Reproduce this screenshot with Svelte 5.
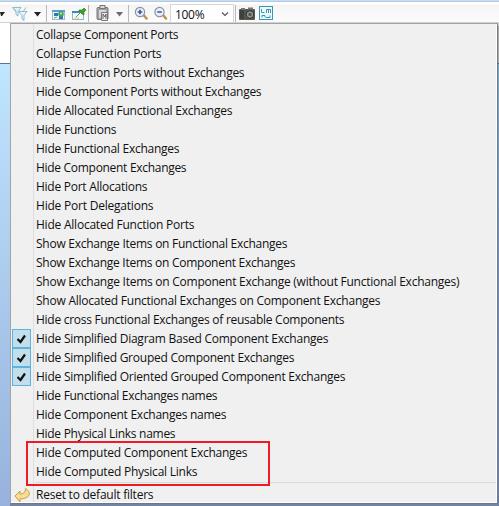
<script>
  const items = [
    ['Collapse Component Ports', 142],
    ['Collapse Function Ports', 125],
    ['Hide Function Ports without Exchanges', 208],
    ['Hide Component Ports without Exchanges', 225],
    ['Hide Allocated Functional Exchanges', 196],
    ['Hide Functions', 80],
    ['Hide Functional Exchanges', 143],
    ['Hide Component Exchanges', 150],
    ['Hide Port Allocations', 111],
    ['Hide Port Delegations', 117],
    ['Hide Allocated Function Ports', 158],
    ['Show Exchange Items on Functional Exchanges', 251],
    ['Show Exchange Items on Component Exchanges', 259],
    ['Show Exchange Items on Component Exchange (without Functional Exchanges)', 423],
    ['Show Allocated Functional Exchanges on Component Exchanges', 344],
    ['Hide cross Functional Exchanges of reusable Components', 308],
    ['Hide Simplified Diagram Based Component Exchanges', 292, true],
    ['Hide Simplified Grouped Component Exchanges', 258, true],
    ['Hide Simplified Oriented Grouped Component Exchanges', 309, true],
    ['Hide Functional Exchanges names', 181],
    ['Hide Component Exchanges names', 190],
    ['Hide Physical Links names', 139],
    ['Hide Computed Component Exchanges', 211],
    ['Hide Computed Physical Links', 161]
  ];

  // Tracks the label out or in so that it fills the given width.
  function fit(node, width) {
    const natural = node.getBoundingClientRect().width;
    node.style.letterSpacing = (width + 0.3 - natural) / node.textContent.length + 'px';
  }
</script>

<div class="window">
  <div class="toolbar">
    <svg width="290" height="23" viewBox="0 0 290 23">
      <path d="M0 12h5l-3 4h-1z" fill="#222" />
      <g fill="#e4f4fb" stroke="#86b4cb" stroke-width=".9">
        <path d="M12.500 7.500h8.500l-3 4.500v4l-2-1.500v-2.500z" />
        <path d="M18.500 11.500h8.500l-3 4v5l-2-1.500v-3.500z" />
      </g>
      <path d="M14 8.500l2.500 3M26 7.500l-3 4" stroke="#a99c86" stroke-width=".8" />
      <path d="M34 12h7l-3.500 4.500z" fill="#222" />
      <path d="M46.500 5v17M88.500 5v17M128.500 5v17" stroke="#b9b9b9" />
      <g>
        <rect x="52.500" y="10.500" width="12" height="9" fill="#e9f7fc" stroke="#9bbfd0" />
        <path d="M52 10h13v2H52z" fill="#5b9bd0" />
        <rect x="54" y="13" width="4" height="3" fill="#2f78b4" />
        <rect x="59" y="16" width="4" height="3" fill="#2f78b4" />
        <circle cx="61" cy="14" r="2.800" fill="#48a15c" /><circle cx="61" cy="13.500" r="1" fill="#d5efd3" />
        <path d="M54 18l3-1" stroke="#62a970" />
      </g>
      <g>
        <rect x="72.500" y="11.500" width="11" height="8" fill="#f3fafd" stroke="#91b8cb" />
        <path d="M72 11h9v2h-9z" fill="#3e86c5" />
        <path d="M76 17l4-4" stroke="#7c8d70" />
        <path d="M79 10l3 0 2-2 2 2-2 2v3l-2-1-3-3z" fill="#38a51f" stroke="#247a20" stroke-width=".6" />
        <path d="M74 18h5" stroke="#e2c86d" />
      </g>
      <g>
        <rect x="97" y="7.500" width="11" height="12" rx="1" fill="#a3a3a3" stroke="#777" />
        <rect x="99" y="10" width="7" height="8" fill="#d6d6d6" />
        <rect x="100" y="5.500" width="5" height="3" fill="#ddd" stroke="#777" />
        <path d="M101.500 12.500h6v8h-6z" fill="#eee" stroke="#777" />
        <path d="M103 19v-5l2 3 1-3v5" fill="none" stroke="#666" />
      </g>
      <path d="M116 12h7l-3.500 4.500z" fill="#6c6c6c" />
      <g stroke-linecap="round">
        <path d="M143.500 15l3 3.500M163 15l3 3.500" stroke="#bd914f" stroke-width="2.500" />
        <circle cx="140" cy="12" r="4.600" fill="#e8f0fa" stroke="#8f9295" stroke-width="1.200" />
        <circle cx="159.500" cy="12" r="4.600" fill="#e8f0fa" stroke="#8f9295" stroke-width="1.200" />
        <path d="M137.700 12h4.600M140 9.700v4.600M157.200 12h4.600" stroke="#3a55b0" stroke-width="1.700" stroke-linecap="butt" />
      </g>
      <rect x="170.500" y="4.500" width="63" height="18" fill="#fff" stroke="#d6d6d6" />
      <path d="M222 12.500l3 3 3-3" fill="none" stroke="#555" stroke-width="1.200" />
      <path d="M235.500 5v17" stroke="#b9b9b9" />
      <g>
        <rect x="239" y="9" width="16" height="11" rx="1" fill="#555751" />
        <path d="M241 8h4v2h-4zM248 7.500h5v2h-5z" fill="#777970" />
        <path d="M241 10v9M243 10v9" stroke="#282a27" />
        <circle cx="250" cy="14.500" r="3.800" fill="#929892" stroke="#292e29" /><circle cx="250" cy="14.500" r="1.800" fill="#4a5b51" />
      </g>
      <g fill="none" stroke="#3c96b1">
        <rect x="259.500" y="6.500" width="13" height="13" fill="#edf9fc" />
        <path d="M261.500 9v3.500h3M266.500 13v-3.500h4v3.500M268.500 10v3M262 17.500v-2h3v2M266 17.500h4v-2" />
      </g>
    </svg>
    <span class="zoom" use:fit={29}>100%</span>
  </div>

  <div class="canvas">
    <div class="left"></div>
    <div class="menu">
      {#each items as [label, width, checked]}
        <div class="row">
          <div class="slot" class:checked>
            {#if checked}
              <svg width="11" height="10" viewBox="0 0 11 10"><path d="M1.500 5l3 3L9 1.500" fill="none" stroke="#111" stroke-width="2.200" /></svg>
            {/if}
          </div>
          <span class="label" use:fit={width}>{label}</span>
        </div>
      {/each}
      <div class="separator"></div>
      <div class="row reset">
        <div class="slot">
          <svg width="17" height="16" viewBox="0 0 17 16"><path d="M1 9l5-5v3c3 .3 5.500-1.500 5.500-5.500 3 2 4.500 4 3.500 6.500-1 2.500-4.500 4-9 3.800V15z" fill="#f8dd91" stroke="#c99b45" /></svg>
        </div>
        <span class="label" use:fit={117}>Reset to default filters</span>
      </div>
    </div>
    <div class="right"></div>
  </div>
  <div class="highlight"></div>
</div>

<style>
  .window {
    position: relative;
    box-sizing: border-box;
    width: 499px;
    height: 506px;
    overflow: hidden;
    display: flex;
    flex-direction: column;
    background: #fff;
    color: #111;
    font: 12px/19px "Open Sans", "Noto Sans", sans-serif;
    white-space: nowrap;
  }
  .toolbar {
    box-sizing: border-box;
    flex: 0 0 23px;
    position: relative;
    background: linear-gradient(#c9dcf1 0 1px, #b3c9e4 1px 2px, #fff 2px 4px, #f5f5f5 5px, #fcfcfc 22px, #d0d0d0 22px);
  }
  .toolbar svg { display: block; }
  .zoom { position: absolute; left: 175px; top: 5px; }
  .canvas { flex: 1; display: flex; min-height: 0; }
  .left {
    width: 10px;
    background: linear-gradient(#fff 0 40px, #5b71a7 40px 41px, #bfe5ff 41px, #a7c5e9 310px, #97b3dd);
  }
  .menu {
    box-sizing: border-box;
    width: 488px;
    height: 481px;
    border: 1px solid #a3a3a3;
    border-right-color: #777d88;
    border-bottom-color: #707682;
    padding: 1px 1px 0 1px;
    background: linear-gradient(90deg, #f0f0f0 22px, #dedede 22px 23px, #f0f0f0 23px);
    box-shadow: inset -1px -1px #fff, 0 2px 0 #7183a6;
  }
  .row { display: flex; height: 19px; align-items: center; }
  .slot {
    box-sizing: border-box;
    width: 19px;
    height: 19px;
    display: flex;
    align-items: center;
    justify-content: center;
    flex: none;
  }
  .checked { background: #c0deeb; border: 1px solid #5eb3dd; }
  .label { margin-left: 5px; }
  .separator { height: 1px; margin: 1px 0 2px 23px; background: #dadada; }
  .reset .slot { margin-left: 1px; }
  .reset .label { margin-left: 4px; }
  .right {
    width: 1px;
    background: linear-gradient(#ddd 0 3px, #aaa 3px 40px, #465779 40px 41px, #73a5ca 41px, #718dbc 278px, #6b80a8);
  }
  .highlight {
    position: absolute;
    box-sizing: border-box;
    left: 26px;
    top: 441px;
    width: 244px;
    height: 45px;
    border: 2px solid #ed1c24;
  }
</style>
